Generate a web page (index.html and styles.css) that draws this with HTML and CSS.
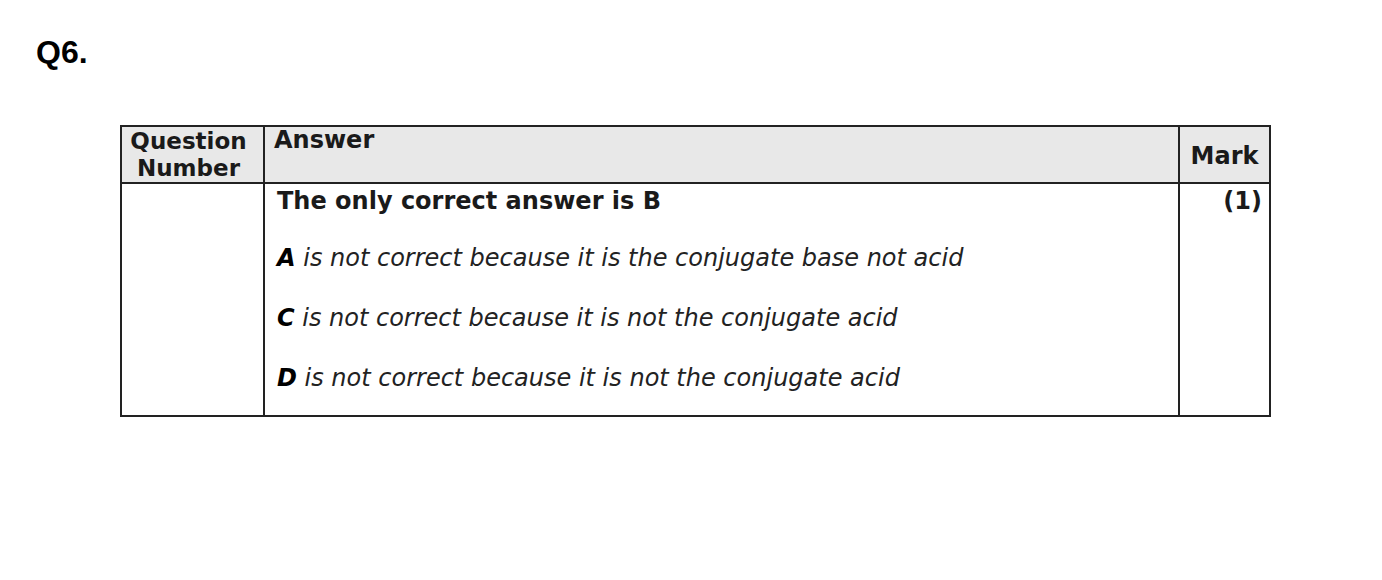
FILE: index.html
```html
<!DOCTYPE html>
<html>
<head>
<meta charset="utf-8">
<link rel="stylesheet" href="styles.css">
</head>
<body>
<div class="page">
  <h1 class="qnum">Q6.</h1>
  <table class="ms">
    <colgroup>
      <col class="c1"><col class="c2"><col class="c3">
    </colgroup>
    <thead>
      <tr class="head">
        <th class="qn">Question<br>Number</th>
        <th class="ans">Answer</th>
        <th class="mk">Mark</th>
      </tr>
    </thead>
    <tbody>
      <tr class="body">
        <td></td>
        <td class="ansbody">
          <p class="main">The only correct answer is B</p>
          <p class="why first"><b>A</b> is not correct because it is the conjugate base not acid</p>
          <p class="why"><b>C</b> is not correct because it is not the conjugate acid</p>
          <p class="why"><b>D</b> is not correct because it is not the conjugate acid</p>
        </td>
        <td class="mkbody">(1)</td>
      </tr>
    </tbody>
  </table>
</div>
</body>
</html>
```

FILE: styles.css
```css
html, body {
  margin: 0;
  padding: 0;
  background: #fff;
}
.page {
  padding: 33px 0 0 36px;
}
.qnum {
  margin: 0;
  font-family: "Liberation Sans", Arial, sans-serif;
  font-weight: bold;
  font-size: 32px;
  line-height: 38px;
  color: #000;
}
.ms {
  margin: 54px 0 0 84px;
  border-collapse: collapse;
  width: 1151px;
  font-family: "DejaVu Sans", Verdana, sans-serif;
  color: #1a1a1a;
}
.c1 { width: 143px; }
.c3 { width: 91px; }
.ms th, .ms td {
  border: 2px solid #222;
  padding: 0;
}
.head {
  background: #e8e8e8;
  height: 56px;
}
.head th {
  font-weight: bold;
  font-size: 24px;
}
.head th.qn {
  text-align: center;
  font-size: 23px;
  line-height: 27px;
  vertical-align: top;
  padding: 1px 8px 0 0;
}
.head th.ans {
  text-align: left;
  vertical-align: top;
  line-height: 26px;
  padding: 0 0 0 9px;
}
.head th.mk {
  text-align: center;
  vertical-align: middle;
  line-height: 28px;
  padding-top: 2px;
}
.body {
  height: 233px;
}
.ms td.ansbody {
  vertical-align: top;
  padding: 2px 0 0 12px;
}
.main {
  margin: 0;
  font-weight: bold;
  font-size: 24px;
  line-height: 30px;
}
.why {
  margin: 30px 0 0 0;
  font-style: italic;
  font-size: 24px;
  line-height: 30px;
  color: #222;
}
.why.first {
  margin-top: 27px;
}
.why b {
  font-style: italic;
  color: #000;
}
.ms td.mkbody {
  vertical-align: top;
  text-align: right;
  font-weight: bold;
  font-size: 24px;
  line-height: 30px;
  padding: 2px 7px 0 0;
}
```
